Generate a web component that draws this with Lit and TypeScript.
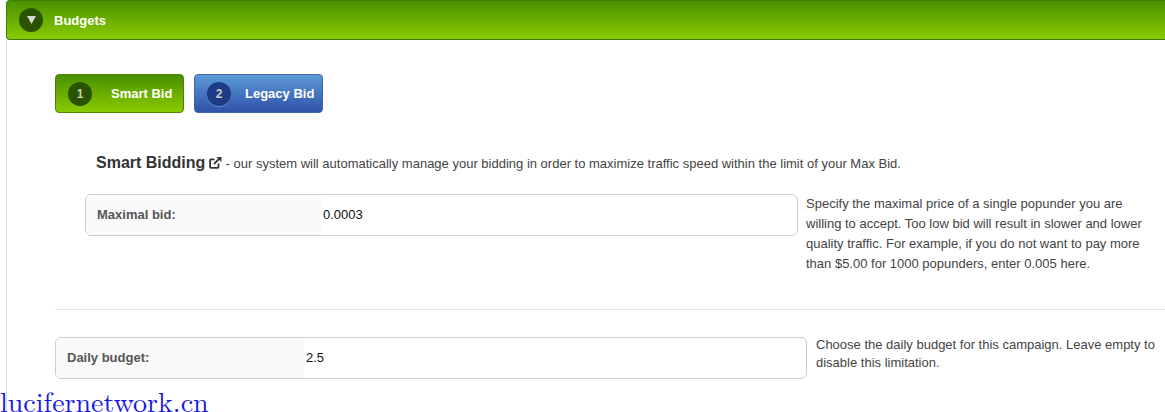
import { LitElement, css, html } from "lit";
import { customElement } from "lit/decorators.js";

@customElement("app-root")
export class AppRoot extends LitElement {
  static styles = css`
    :host {
      display: block;
      position: relative;
      width: 1165px;
      height: 412px;
      overflow: hidden;
      background: #fff;
      font-family: "Liberation Sans", Arial, sans-serif;
      font-size: 13px;
      color: #444;
    }

    .header {
      display: flex;
      align-items: center;
      box-sizing: border-box;
      height: 40px;
      margin-left: 6px;
      padding-left: 12px;
      gap: 11px;
      border: 1px solid #3f7f00;
      border-right: 0;
      border-radius: 4px 0 0 4px;
      background: linear-gradient(#4a9200, #8aca00);
      color: #fff;
      font-size: 13px;
      font-weight: bold;
    }

    .circle {
      display: flex;
      align-items: center;
      justify-content: center;
      flex: none;
      width: 24px;
      height: 24px;
      border-radius: 50%;
      background: #2a5300;
      color: #c5cdbb;
      font-size: 12px;
      font-weight: bold;
    }

    .circle.blue {
      background: #1d3a85;
      box-shadow: 0 1px 0 #5d8fd0;
    }

    .body {
      box-sizing: border-box;
      height: 372px;
      margin-left: 6px;
      padding: 34px 0 0 48px;
      border-left: 1px solid #ddd;
    }

    .tabs {
      display: flex;
      gap: 10px;
    }

    .tab {
      display: flex;
      align-items: center;
      box-sizing: border-box;
      width: 129px;
      height: 39px;
      padding-left: 12px;
      border: 1px solid #4a8500;
      border-radius: 4px;
      background: linear-gradient(#4a9000, #8aca00);
      color: #fff;
      font-size: 13px;
      font-weight: bold;
    }

    .tab.smart .label {
      margin-left: 19px;
    }

    .tab.legacy {
      border-color: #3c66ad;
      background: linear-gradient(#5c9ad6, #2f52a8);
    }

    .tab.legacy .label {
      margin-left: 14px;
    }

    .intro {
      margin: 40px 0 0 41px;
      height: 20px;
      line-height: 20px;
      white-space: nowrap;
    }

    .intro strong {
      font-size: 16px;
      font-weight: bold;
      color: #333;
    }

    .intro svg {
      vertical-align: -1px;
    }

    .row {
      display: flex;
      align-items: flex-start;
    }

    .row.bid {
      margin: 21px 0 0 30px;
      gap: 8px;
    }

    .row.daily {
      gap: 9px;
    }

    .field {
      display: flex;
      box-sizing: border-box;
      height: 42px;
      border: 1px solid #c9cdd9;
      border-radius: 6px;
      overflow: hidden;
    }

    .bid .field {
      width: 713px;
    }

    .daily .field {
      width: 752px;
    }

    .name {
      display: flex;
      align-items: center;
      box-sizing: border-box;
      padding: 0 0 1px 11px;
      background: #fafafa;
      color: #555;
      font-weight: bold;
    }

    .bid .name {
      width: 235px;
    }

    .daily .name {
      width: 248px;
    }

    .value {
      display: flex;
      align-items: center;
      padding: 0 0 1px 2px;
      color: #111;
    }

    .help {
      line-height: 20px;
      color: #444;
    }

    .bid .help {
      width: 350px;
    }

    .daily .help {
      width: 349px;
      line-height: 18px;
      margin-top: -1px;
    }

    hr {
      height: 1px;
      margin: 35px 0 27px;
      border: 0;
      background: #e4e4e4;
    }

    .watermark {
      position: absolute;
      left: 0;
      top: 388px;
      font-family: "Latin Modern Roman", "DejaVu Serif", serif;
      font-size: 28px;
      line-height: 24px;
      color: #1a1ae0;
    }
  `;

  render() {
    return html`
      <div class="header">
        <span class="circle">
          <svg width="9" height="8" viewBox="0 0 9 8"><path d="M0 0h9L4.500 8z" fill="#d4d7cf"></path></svg>
        </span>
        Budgets
      </div>
      <div class="body">
        <div class="tabs">
          <div class="tab smart"><span class="circle">1</span><span class="label">Smart Bid</span></div>
          <div class="tab legacy"><span class="circle blue">2</span><span class="label">Legacy Bid</span></div>
        </div>
        <div class="intro">
          <strong>Smart Bidding</strong>
          <svg width="13" height="13" viewBox="0 0 13 13" fill="none" stroke="#333" stroke-width="1.800">
            <path d="M9.500 7.500v3.500a.8.800 0 0 1-.8.800H1.900a.8.800 0 0 1-.8-.8V4.200a.8.800 0 0 1 .8-.8h3.600"></path>
            <path d="M5 8l6.500-6.500"></path>
            <path d="M7.500 1h5v5z" fill="#333" stroke="none"></path>
          </svg>
          - our system will automatically manage your bidding in order to maximize traffic speed within the limit of your Max Bid.
        </div>
        <div class="row bid">
          <div class="field"><span class="name">Maximal bid:</span><span class="value">0.0003</span></div>
          <div class="help">
            Specify the maximal price of a single popunder you are willing to accept. Too low bid will result in slower and lower quality traffic. For example, if you do not want to pay more than $5.00 for 1000 popunders, enter 0.005 here.
          </div>
        </div>
        <hr />
        <div class="row daily">
          <div class="field"><span class="name">Daily budget:</span><span class="value">2.5</span></div>
          <div class="help">
            Choose the daily budget for this campaign. Leave empty to disable this limitation.
          </div>
        </div>
      </div>
      <div class="watermark">lucifernetwork.cn</div>
    `;
  }
}
